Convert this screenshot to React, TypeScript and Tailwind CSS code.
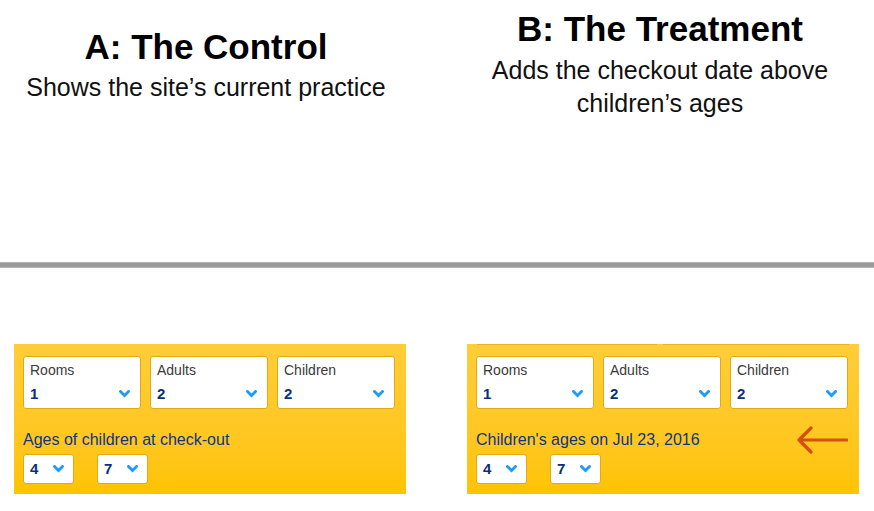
import React from "react";

const SANS = "font-['Liberation_Sans',Arial,sans-serif]";

function Chevron() {
  return (
    <svg width="11" height="8" viewBox="0 0 11 8" className="shrink-0">
      <path d="M1.5 1.5 L5.5 5.5 L9.5 1.5" fill="none" stroke="#1b9cf7" strokeWidth="2.8" strokeLinecap="square" />
    </svg>
  );
}

function Select({ label, value }: { label: string; value: string }) {
  return (
    <div className="w-[118px] h-[53px] bg-white border border-[#e3a912] rounded-[3px] flex flex-col pt-[4px] pl-[6px] pr-[10px]">
      <span className="text-[14px] leading-[18px] text-[#3a3a3a]">{label}</span>
      <div className="mt-[6px] flex items-center justify-between">
        <span className="text-[15px] leading-[18px] font-bold text-[#0a2f7c]">{value}</span>
        <Chevron />
      </div>
    </div>
  );
}

function AgeSelect({ value }: { value: string }) {
  return (
    <div className="w-[51px] h-[30px] bg-white border border-[#e3a912] rounded-[3px] flex items-center gap-[15px] pl-[6px]">
      <span className="text-[15px] leading-[18px] font-bold text-[#0a2f7c]">{value}</span>
      <Chevron />
    </div>
  );
}

function Panel({ ageLabel, arrow }: { ageLabel: string; arrow?: boolean }) {
  return (
    <div className={`relative w-[392px] h-[150px] bg-gradient-to-b from-[#ffcd38] to-[#ffc300] pt-[12px] pl-[9px] pr-[10px] ${SANS}`}>
      {arrow && (
        <div className="absolute top-0 left-[10px] right-[10px] flex gap-[6px]">
          <div className="h-px w-[180px] bg-[#e9b222]" />
          <div className="h-px flex-1 bg-[#e9b222]" />
        </div>
      )}
      <div className="flex gap-[9px]">
        <Select label="Rooms" value="1" />
        <Select label="Adults" value="2" />
        <Select label="Children" value="2" />
      </div>
      <div className="mt-[21px] h-[20px] flex items-center justify-between">
        <span className="text-[16px] leading-[20px] text-[#0d3585]">{ageLabel}</span>
        {arrow && (
          <svg width="52" height="28" viewBox="0 0 52 28" className="mr-[1px] -my-[4px]">
            <path d="M51 14 H3 M15 2 L3 14 L15 26" fill="none" stroke="#d4500e" strokeWidth="3.2" strokeLinecap="round" strokeLinejoin="round" />
          </svg>
        )}
      </div>
      <div className="mt-[4px] flex gap-[23px]">
        <AgeSelect value="4" />
        <AgeSelect value="7" />
      </div>
    </div>
  );
}

export default function App() {
  return (
    <div className={`w-[874px] h-[511px] bg-white overflow-hidden ${SANS}`}>
      <div className="h-[262px] flex">
        <div className="w-[412px] flex flex-col items-center pt-[29px]">
          <h1 className="text-[35px] leading-[36px] font-bold text-black">A: The Control</h1>
          <p className="mt-[6px] text-[25px] leading-[33px] text-[#111]">Shows the site’s current practice</p>
        </div>
        <div className="flex-1 flex flex-col items-center pt-[11px] pl-[34px]">
          <h1 className="text-[35px] leading-[36px] font-bold text-black">B: The Treatment</h1>
          <p className="mt-[7px] text-[25px] leading-[33px] text-[#111] text-center">
            Adds the checkout date above
            <br />
            children’s ages
          </p>
        </div>
      </div>
      <div className="h-[6px] bg-[#9a9a9a] border-y border-[#b5b5b5]" />
      <div className="flex pt-[76px]">
        <div className="ml-[14px]">
          <Panel ageLabel="Ages of children at check-out" />
        </div>
        <div className="ml-[61px]">
          <Panel ageLabel="Children's ages on Jul 23, 2016" arrow />
        </div>
      </div>
    </div>
  );
}
